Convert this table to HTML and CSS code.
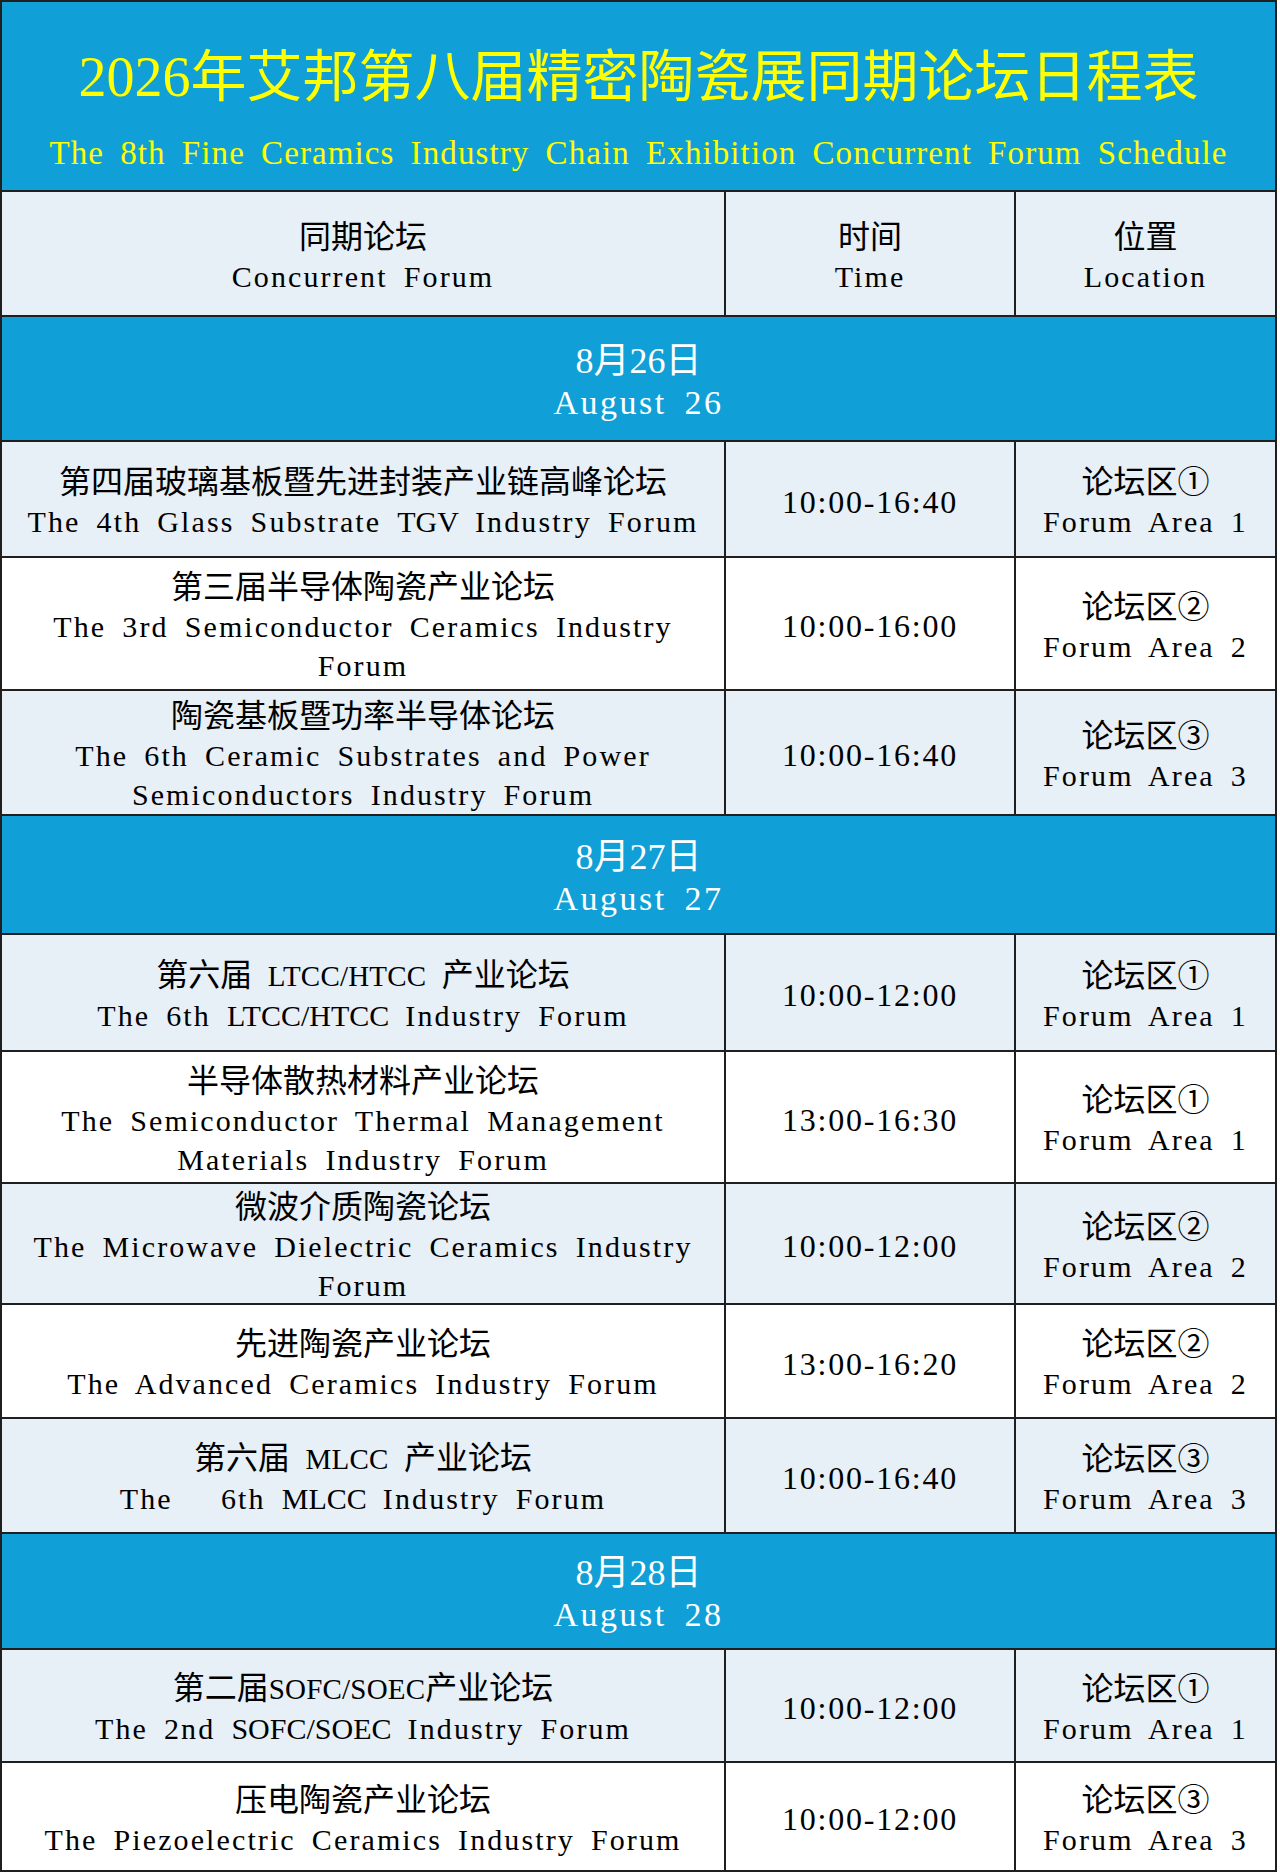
FILE: index.html
```html
<!DOCTYPE html>
<html lang="zh-CN">
<head>
<meta charset="utf-8">
<title>2026年艾邦第八届精密陶瓷展同期论坛日程表</title>
<link rel="stylesheet" href="styles.css">
</head>
<body>
<div class="sched">
  <div class="title">
    <div class="t-cn">2026年艾邦第八届精密陶瓷展同期论坛日程表</div>
    <div class="t-en">The 8th Fine Ceramics Industry Chain Exhibition Concurrent Forum Schedule</div>
  </div>

  <div class="cell light"><div class="cn">同期论坛</div><div class="en">Concurrent Forum</div></div>
  <div class="cell light"><div class="cn">时间</div><div class="en">Time</div></div>
  <div class="cell light"><div class="cn">位置</div><div class="en">Location</div></div>

  <div class="cell band"><div class="d-cn">8月26日</div><div class="d-en">August 26</div></div>

  <div class="cell light"><div class="cn">第四届玻璃基板暨先进封装产业链高峰论坛</div><div class="en">The 4th Glass Substrate <span class="caps">TGV</span> Industry Forum</div></div>
  <div class="cell light"><div class="tm">10:00-16:40</div></div>
  <div class="cell light"><div class="cn">论坛区①</div><div class="en">Forum Area 1</div></div>

  <div class="cell"><div class="cn">第三届半导体陶瓷产业论坛</div><div class="en">The 3rd Semiconductor Ceramics Industry</div><div class="en">Forum</div></div>
  <div class="cell"><div class="tm">10:00-16:00</div></div>
  <div class="cell"><div class="cn">论坛区②</div><div class="en">Forum Area 2</div></div>

  <div class="cell light"><div class="cn">陶瓷基板暨功率半导体论坛</div><div class="en">The 6th Ceramic Substrates and Power</div><div class="en">Semiconductors Industry Forum</div></div>
  <div class="cell light"><div class="tm">10:00-16:40</div></div>
  <div class="cell light"><div class="cn">论坛区③</div><div class="en">Forum Area 3</div></div>

  <div class="cell band"><div class="d-cn">8月27日</div><div class="d-en">August 27</div></div>

  <div class="cell light"><div class="cn">第六届<span class="lt"> LTCC/HTCC </span>产业论坛</div><div class="en">The 6th <span class="caps">LTCC/HTCC</span> Industry Forum</div></div>
  <div class="cell light"><div class="tm">10:00-12:00</div></div>
  <div class="cell light"><div class="cn">论坛区①</div><div class="en">Forum Area 1</div></div>

  <div class="cell"><div class="cn">半导体散热材料产业论坛</div><div class="en">The Semiconductor Thermal Management</div><div class="en">Materials Industry Forum</div></div>
  <div class="cell"><div class="tm">13:00-16:30</div></div>
  <div class="cell"><div class="cn">论坛区①</div><div class="en">Forum Area 1</div></div>

  <div class="cell light"><div class="cn">微波介质陶瓷论坛</div><div class="en">The Microwave Dielectric Ceramics Industry</div><div class="en">Forum</div></div>
  <div class="cell light"><div class="tm">10:00-12:00</div></div>
  <div class="cell light"><div class="cn">论坛区②</div><div class="en">Forum Area 2</div></div>

  <div class="cell"><div class="cn">先进陶瓷产业论坛</div><div class="en">The Advanced Ceramics Industry Forum</div></div>
  <div class="cell"><div class="tm">13:00-16:20</div></div>
  <div class="cell"><div class="cn">论坛区②</div><div class="en">Forum Area 2</div></div>

  <div class="cell light"><div class="cn">第六届<span class="lt"> MLCC </span>产业论坛</div><div class="en">The   6th <span class="caps">MLCC</span> Industry Forum</div></div>
  <div class="cell light"><div class="tm">10:00-16:40</div></div>
  <div class="cell light"><div class="cn">论坛区③</div><div class="en">Forum Area 3</div></div>

  <div class="cell band"><div class="d-cn">8月28日</div><div class="d-en">August 28</div></div>

  <div class="cell light"><div class="cn">第二届<span class="lt">SOFC/SOEC</span>产业论坛</div><div class="en">The 2nd <span class="caps">SOFC/SOEC</span> Industry Forum</div></div>
  <div class="cell light"><div class="tm">10:00-12:00</div></div>
  <div class="cell light"><div class="cn">论坛区①</div><div class="en">Forum Area 1</div></div>

  <div class="cell"><div class="cn">压电陶瓷产业论坛</div><div class="en">The Piezoelectric Ceramics Industry Forum</div></div>
  <div class="cell"><div class="tm">10:00-12:00</div></div>
  <div class="cell"><div class="cn">论坛区③</div><div class="en">Forum Area 3</div></div>
</div>
</body>
</html>
```

FILE: styles.css
```css
html, body {
  margin: 0;
  padding: 0;
  background: #ffffff;
}

.sched {
  box-sizing: border-box;
  display: grid;
  width: 1277px;
  grid-template-columns: 722px 288px 259px;
  grid-template-rows: 188px 123px 123px 114px 131px 123px 117px 115px 130px 119px 112px 113px 114px 111px 107px;
  gap: 2px;
  padding: 2px;
  background: #1f1f1f;
  font-family: "Liberation Serif", "Noto Sans CJK SC", serif;
  color: #000000;
}

.title {
  grid-column: 1 / -1;
  background: #109fd6;
  color: #ffff00;
  display: flex;
  flex-direction: column;
  align-items: center;
  padding-top: 43px;
  box-sizing: border-box;
}

.t-cn {
  font-size: 56px;
  line-height: 64px;
  font-weight: 400;
  white-space: nowrap;
}

.t-en {
  margin-top: 24px;
  font-size: 33px;
  line-height: 40px;
  letter-spacing: 1.1px;
  word-spacing: 6.8px;
  white-space: pre;
}

.cell {
  box-sizing: border-box;
  display: flex;
  flex-direction: column;
  align-items: center;
  justify-content: center;
  padding-top: 6px;
  background: #ffffff;
  text-align: center;
}

.light {
  background: #e7eff7;
}

.band {
  grid-column: 1 / -1;
  background: #109fd6;
  color: #ffffff;
}

.cn {
  font-size: 32px;
  line-height: 39px;
  font-weight: 400;
  white-space: nowrap;
}

.lt {
  font-size: 29px;
  letter-spacing: 0.2px;
  word-spacing: 8px;
  white-space: pre;
}

.en {
  font-size: 30px;
  line-height: 39px;
  letter-spacing: 2.1px;
  word-spacing: 6.5px;
  white-space: pre;
}

.caps {
  letter-spacing: 0;
}

.tm {
  font-size: 32px;
  line-height: 39px;
  letter-spacing: 1.8px;
}

.d-cn {
  font-size: 36px;
  line-height: 41px;
  font-weight: 400;
  white-space: nowrap;
}

.d-en {
  font-size: 34px;
  line-height: 41px;
  letter-spacing: 2.5px;
  word-spacing: 7px;
  white-space: pre;
}
```
